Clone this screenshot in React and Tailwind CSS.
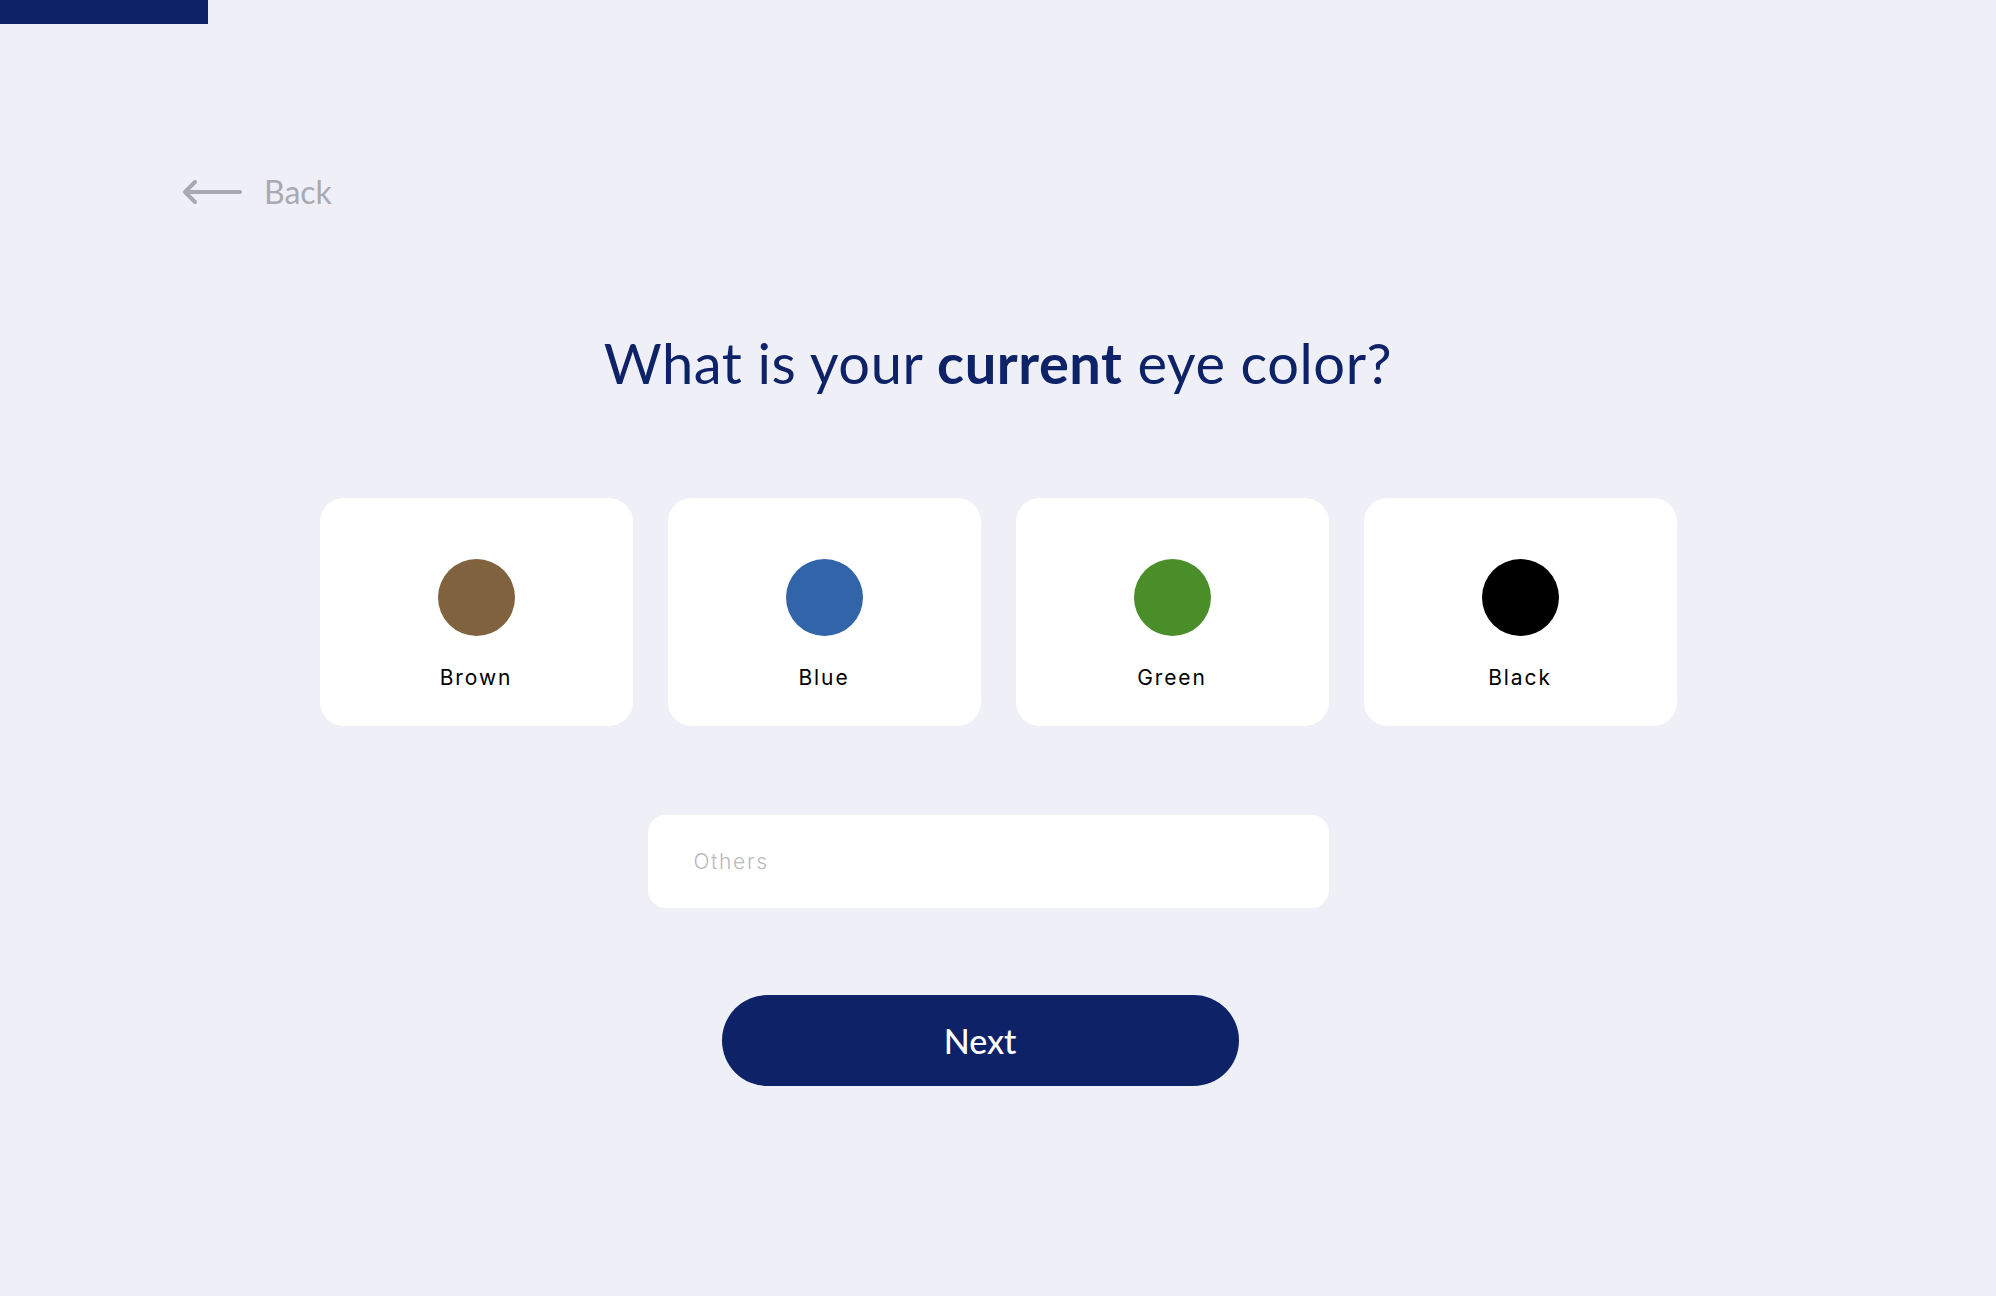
import React, { useState } from "react";

const colors = [
  { name: "Brown", swatch: "bg-[#80623f]" },
  { name: "Blue", swatch: "bg-[#3164a8]" },
  { name: "Green", swatch: "bg-[#4a8e29]" },
  { name: "Black", swatch: "bg-black" },
];

const ColorCard = ({ name, swatch, selected, onSelect }) => {
  return (
    <button
      type="button"
      onClick={onSelect}
      className={`flex flex-col items-center w-[313px] h-[228px] pt-[61px] bg-white rounded-[24px] ${selected ? "ring-2 ring-[#0e2367]" : ""}`}
    >
      <span className={`block w-[77px] h-[77px] rounded-full ${swatch}`} />
      <span className="mt-[30px] text-[21px] leading-[24px] tracking-[0.09em] text-black font-['Inter',sans-serif]">{name}</span>
    </button>
  );
};

const App = () => {
  const [selected, setSelected] = useState(null);

  return (
    <div className="min-h-screen w-full bg-[#eff0f7] font-['Lato',sans-serif]">
      <div className="w-[208px] h-[24px] bg-[#0e2367]" />

      <div className="flex items-center ml-[182px] mt-[148px] h-[40px] text-[#a9a9b1]">
        <svg width="60" height="26" viewBox="0 0 60 26" fill="none" stroke="currentColor" strokeWidth="4" strokeLinecap="round" strokeLinejoin="round">
          <path d="M58 13H4" />
          <path d="M13 3L3 13l10 10" />
        </svg>
        <span className="ml-[22px] text-[32px] leading-[40px]">Back</span>
      </div>

      <h1 className="mt-[115px] text-center text-[56px] leading-[72px] text-[#0e2367] tracking-[0.01em]">
        What is your <span className="font-bold">current</span> eye color?
      </h1>

      <div className="w-[1357px] mx-auto mt-[99px]">
        <div className="flex gap-[35px]">
          {colors.map((c) => (
            <ColorCard key={c.name} {...c} selected={selected === c.name} onSelect={() => setSelected(c.name)} />
          ))}
        </div>

        <input
          type="text"
          placeholder="Others"
          className="block ml-[328px] mt-[89px] w-[681px] h-[93px] px-[46px] bg-white rounded-[18px] outline-none text-[21px] tracking-[0.08em] text-black placeholder:text-[#b9b9bd] font-['Inter',sans-serif] font-light"
        />

        <button
          type="button"
          className="block ml-[402px] mt-[87px] w-[517px] h-[91px] rounded-full bg-[#0e2367] text-white text-[34px] font-medium"
        >
          Next
        </button>
      </div>
    </div>
  );
};

export default App;
